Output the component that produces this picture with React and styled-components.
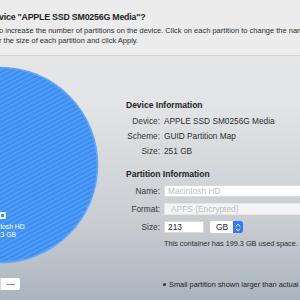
import styled, { createGlobalStyle } from "styled-components";

const GlobalStyle = createGlobalStyle`
  html, body {
    margin: 0;
    padding: 0;
    width: 300px;
    height: 300px;
    overflow: hidden;
  }
  body {
    font-family: "Liberation Sans", Arial, sans-serif;
    color: #2b2b2b;
  }
`;

const Window = styled.div`
  display: flex;
  flex-direction: column;
  width: 300px;
  height: 300px;
  overflow: hidden;
  background: linear-gradient(180deg, #e6e8e9 0%, #e2e4e6 35%, #c8ccd1 75%, #aab4bf 100%);
`;

const Header = styled.div`
  flex: 0 0 56px;
  box-sizing: border-box;
  padding-top: 10px;
  background: #ececec;
  border-bottom: 1px solid #d4d4d4;
  white-space: nowrap;
  overflow: hidden;
`;

const Title = styled.div`
  font-size: 8.8px;
  font-weight: 700;
  letter-spacing: -0.2px;
  line-height: 14px;
  color: #1f1f1f;
  margin-left: -1px;
`;

const Description = styled.div`
  margin-top: 2px;
  font-size: 7.5px;
  line-height: 10px;
  color: #2e2e2e;
  margin-left: -1px;
`;

const Body = styled.div`
  flex: 1;
  display: flex;
  min-height: 0;
`;

const PieColumn = styled.div`
  flex: 0 0 124px;
  display: flex;
  flex-direction: column;
`;

const PieChart = styled.svg`
  display: block;
  width: 110px;
  height: 215px;
`;

const Segmented = styled.div`
  display: flex;
  margin-top: 7px;
  margin-left: -20px;
`;

const SegButton = styled.button`
  width: 20px;
  height: 12px;
  padding: 0;
  border: none;
  border-left: ${(p) => (p.$divider ? "1px solid #d7d7d7" : "none")};
  background: #fefefe;
  border-radius: ${(p) => (p.$last ? "0 2px 2px 0" : "2px 0 0 2px")};
  display: flex;
  align-items: center;
  justify-content: center;
  &::after {
    content: "";
    display: block;
    width: 8px;
    height: 1px;
    background: #8a8a8a;
  }
`;

const InfoPanel = styled.div`
  flex: 1;
  min-width: 0;
  padding-top: 42px;
  padding-left: 2px;
  overflow: hidden;
  white-space: nowrap;
`;

const SectionTitle = styled.div`
  font-size: 8.5px;
  font-weight: 700;
  line-height: 14px;
  color: #222;
  margin-top: ${(p) => p.$top || 0}px;
`;

const InfoGrid = styled.div`
  display: grid;
  grid-template-columns: 34px max-content;
  column-gap: 4px;
  grid-auto-rows: 15px;
  align-items: center;
  margin-top: 1.5px;
  font-size: 8.3px;
  color: #2f2f2f;
`;

const Label = styled.div`
  text-align: right;
  color: #363636;
`;

const FormGrid = styled.div`
  display: grid;
  grid-template-columns: 34px max-content;
  column-gap: 4px;
  row-gap: 5px;
  grid-auto-rows: 13px;
  align-items: center;
  margin-top: 4px;
  font-size: 8.3px;
`;

const Field = styled.div`
  box-sizing: border-box;
  height: 12px;
  width: ${(p) => p.$width || 150}px;
  padding-left: ${(p) => p.$pad || 3}px;
  display: flex;
  align-items: center;
  background: ${(p) => (p.$disabled ? "#f4f4f4" : "#ffffff")};
  border: 1px solid ${(p) => (p.$disabled ? "#e6e6e6" : "#d9d9d9")};
  color: ${(p) => (p.$muted ? "#c0c0c0" : "#262626")};
  font-size: 8.4px;
`;

const SizeRow = styled.div`
  display: flex;
  align-items: center;
  gap: 6px;
`;

const PopUp = styled.div`
  box-sizing: border-box;
  display: flex;
  align-items: center;
  justify-content: space-between;
  width: 33px;
  height: 12px;
  padding-left: 6px;
  background: #fff;
  border-radius: 2px;
  box-shadow: 0 0 0 0.5px #d0d0d0;
  font-size: 8.4px;
  color: #262626;
`;

const Stepper = styled.div`
  width: 10px;
  height: 12px;
  border-radius: 0 2px 2px 0;
  background: #2f7df6;
  display: flex;
  align-items: center;
  justify-content: center;
`;

const Note = styled.div`
  margin-left: 38px;
  margin-top: 5px;
  font-size: 7.3px;
  line-height: 10px;
  color: #2c2c2c;
`;

const Footnote = styled.div`
  margin-left: 37px;
  margin-top: 31px;
  font-size: 7.4px;
  line-height: 10px;
  color: #222;
  display: flex;
  align-items: center;
  gap: 3px;
  &::before {
    content: "";
    flex: 0 0 3px;
    height: 3px;
    border-radius: 50%;
    background: #333;
  }
`;

const Pie = () => (
  <PieChart viewBox="0 0 110 215">
    <defs>
      <pattern id="hatch" width="4" height="4" patternUnits="userSpaceOnUse" patternTransform="rotate(-28)">
        <rect width="4" height="4" fill="#3a8ef2" />
        <rect width="4" height="1.4" fill="#58a2f7" />
      </pattern>
    </defs>
    <circle cx="0" cy="109" r="97.5" fill="url(#hatch)" stroke="#64a6f6" strokeWidth="1.6" />
    <g>
      <rect x="-4" y="156" width="10" height="7" rx="1" fill="#eaf3ff" />
      <rect x="1" y="158" width="3" height="3" fill="#3a8ef2" />
    </g>
    <text x="-18" y="173" fill="#ffffff" fontSize="6.8" fontFamily="Liberation Sans, Arial, sans-serif">
      Macintosh HD
    </text>
    <text x="-7" y="181" fill="#ffffff" fontSize="6.8" fontFamily="Liberation Sans, Arial, sans-serif">
      213 GB
    </text>
  </PieChart>
);

const Chevrons = () => (
  <svg width="6" height="9" viewBox="0 0 6 9">
    <path d="M1 3.2 L3 1.3 L5 3.2" fill="none" stroke="#fff" strokeWidth="1" strokeLinecap="round" strokeLinejoin="round" />
    <path d="M1 5.8 L3 7.7 L5 5.8" fill="none" stroke="#fff" strokeWidth="1" strokeLinecap="round" strokeLinejoin="round" />
  </svg>
);

const App = () => (
  <>
    <GlobalStyle />
    <Window>
      <Header>
        <Title>vice "APPLE SSD SM0256G Media"?</Title>
        <Description>
          o increase the number of partitions on the device. Click on each partition to change the name
          <br />r the size of each partition and click Apply.
        </Description>
      </Header>
      <Body>
        <PieColumn>
          <Pie />
          <Segmented>
            <SegButton aria-label="Add" />
            <SegButton $divider $last aria-label="Remove" />
          </Segmented>
        </PieColumn>
        <InfoPanel>
          <SectionTitle>Device Information</SectionTitle>
          <InfoGrid>
            <Label>Device:</Label>
            <div>APPLE SSD SM0256G Media</div>
            <Label>Scheme:</Label>
            <div>GUID Partition Map</div>
            <Label>Size:</Label>
            <div>251 GB</div>
          </InfoGrid>
          <SectionTitle $top={8}>Partition Information</SectionTitle>
          <FormGrid>
            <Label>Name:</Label>
            <Field $muted>Macintosh HD</Field>
            <Label>Format:</Label>
            <Field $muted $disabled $pad={6}>APFS (Encrypted)</Field>
            <Label>Size:</Label>
            <SizeRow>
              <Field $width={40}>213</Field>
              <PopUp>
                GB
                <Stepper>
                  <Chevrons />
                </Stepper>
              </PopUp>
            </SizeRow>
          </FormGrid>
          <Note>This container has 199.3 GB used space.</Note>
          <Footnote>Small partition shown larger than actual size.</Footnote>
        </InfoPanel>
      </Body>
    </Window>
  </>
);

export default App;
